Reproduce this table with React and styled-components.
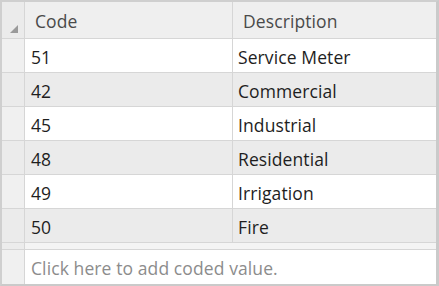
import React from "react";
import styled, { createGlobalStyle } from "styled-components";

const Global = createGlobalStyle`
  html, body { margin: 0; padding: 0; background: #ffffff; }
  body { font-family: "Open Sans", "Noto Sans", "Liberation Sans", sans-serif; }
`;

const Grid = styled.div`
  width: 439px;
  height: 286px;
  box-sizing: border-box;
  border-top: 2px solid #cfcfcf;
  border-left: 2px solid #cfcfcf;
  border-right: 3px solid #cacaca;
  border-bottom: 2px solid #cacaca;
  background: #ffffff;
  display: flex;
  flex-direction: column;
`;

const Row = styled.div`
  display: grid;
  grid-template-columns: 23px 208px 1fr;
  height: 34px;
  flex-shrink: 0;
  box-sizing: border-box;
  border-bottom: 1px solid #d6d6d6;
  background: ${(p) => (p.$alt ? "#ebebeb" : "#ffffff")};
`;

const RowHead = styled.div`
  background: ${(p) => (p.$alt ? "#ebebeb" : "#f0f0f0")};
  border-right: 1px solid #d6d6d6;
  position: relative;
`;

const Cell = styled.div`
  display: flex;
  align-items: center;
  padding-left: ${(p) => p.$pad || 6}px;
  padding-top: 2px;
  font-size: 17.5px;
  letter-spacing: 0.1px;
  color: ${(p) => p.$color || "#1e1e1e"};
  white-space: nowrap;
  overflow: hidden;
  border-right: ${(p) => (p.$last ? "none" : "1px solid #d6d6d6")};
`;

const HeadRow = styled(Row)`
  background: #efefef;
  height: 37px;
`;

const HeadCell = styled(Cell)`
  color: #4a4a4a;
  padding-left: 10px;
  padding-top: 1px;
`;

const Corner = styled.svg`
  position: absolute;
  left: 8px;
  bottom: 5px;
`;

const Spacer = styled.div`
  height: 7px;
  flex-shrink: 0;
  box-sizing: border-box;
  border-bottom: 1px solid #d6d6d6;
  display: grid;
  grid-template-columns: 23px 1fr;
  background: #f4f4f4;
`;

const SpacerHead = styled.div`
  background: #ececec;
  border-right: 1px solid #d6d6d6;
`;

const AddRow = styled.div`
  display: grid;
  grid-template-columns: 23px 1fr;
  flex: 1;
`;

const rows = [
  ["51", "Service Meter"],
  ["42", "Commercial"],
  ["45", "Industrial"],
  ["48", "Residential"],
  ["49", "Irrigation"],
  ["50", "Fire"],
];

export default function App() {
  return (
    <>
      <Global />
      <Grid>
        <HeadRow>
          <RowHead $alt>
            <Corner width="8" height="8" viewBox="0 0 8 8">
              <polygon points="8,0 8,8 0,8" fill="#9a9a9a" />
            </Corner>
          </RowHead>
          <HeadCell>Code</HeadCell>
          <HeadCell $last>Description</HeadCell>
        </HeadRow>
        {rows.map(([c, d], i) => (
          <Row key={c} $alt={i % 2 === 1}>
            <RowHead $alt={i % 2 === 1} />
            <Cell>{c}</Cell>
            <Cell $last $pad={5}>{d}</Cell>
          </Row>
        ))}
        <Spacer>
          <SpacerHead />
        </Spacer>
        <AddRow>
          <RowHead />
          <Cell $last $color="#8c8c8c">Click here to add coded value.</Cell>
        </AddRow>
      </Grid>
    </>
  );
}
